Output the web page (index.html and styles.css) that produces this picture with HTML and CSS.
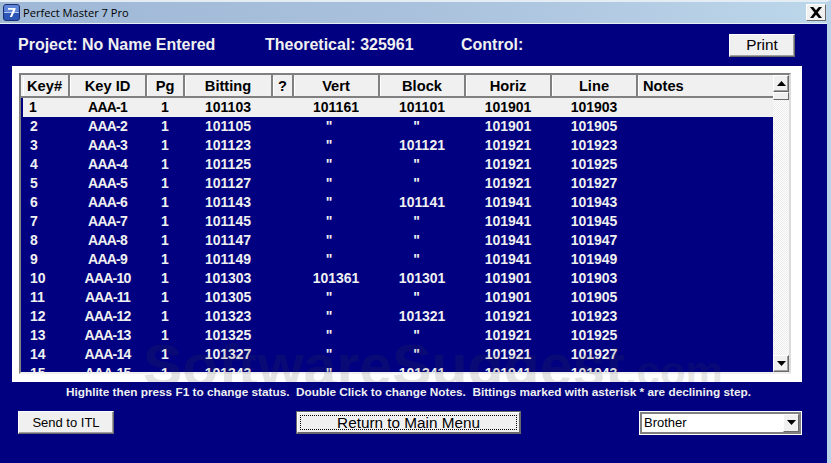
FILE: index.html
```html
<!DOCTYPE html>
<html lang="en">
<head>
<meta charset="utf-8">
<title>Perfect Master 7 Pro</title>
<link rel="stylesheet" href="styles.css">
</head>
<body>
<div class="window">
  <header class="titlebar">
    <svg class="appicon" width="17" height="17" viewBox="0 0 17 17">
      <rect x="0.5" y="0.5" width="16" height="16" rx="2.500" fill="#2c55b8" stroke="#1b2f70"/>
      <rect x="1" y="1" width="15" height="7" rx="2" fill="#5f86d8"/>
      <rect x="1" y="8" width="15" height="1" fill="#b4c6ee"/>
      <path d="M5 4h7.500v1.500L9 13H6.800l3.200-7.200H5z" fill="#fff"/>
    </svg>
    <span class="title">Perfect Master 7 Pro</span>
    <button class="close" aria-label="Close">
      <svg width="14" height="11" viewBox="0 0 14 11"><path d="M1 0h3.200L7 3.300 9.800 0H13L8.700 5.500 13 11H9.800L7 7.700 4.200 11H1l4.300-5.500z" fill="#000"/></svg>
    </button>
  </header>
  <main class="body">
    <section class="info">
      <span class="info-project">Project: No Name Entered</span>
      <span class="info-theo">Theoretical: 325961</span>
      <span class="info-control">Control:</span>
      <button class="btn btn-print">Print</button>
    </section>
    <section class="panel">
      <div class="frame">
        <div class="grid">
          <table>
            <colgroup>
              <col class="c-key"><col class="c-id"><col class="c-pg"><col class="c-bit"><col class="c-q"><col class="c-v"><col class="c-b"><col class="c-h"><col class="c-l"><col class="c-n">
            </colgroup>
            <thead>
              <tr><th>Key#</th><th>Key ID</th><th>Pg</th><th>Bitting</th><th>?</th><th>Vert</th><th>Block</th><th>Horiz</th><th>Line</th><th class="th-notes">Notes</th></tr>
            </thead>
            <tbody>
              <tr class="sel"><td>1</td><td>AAA-1</td><td>1</td><td>101103</td><td></td><td>101161</td><td>101101</td><td>101901</td><td>101903</td><td></td></tr>
              <tr><td>2</td><td>AAA-2</td><td>1</td><td>101105</td><td></td><td class="dv">"</td><td class="db">"</td><td>101901</td><td>101905</td><td></td></tr>
              <tr><td>3</td><td>AAA-3</td><td>1</td><td>101123</td><td></td><td class="dv">"</td><td>101121</td><td>101921</td><td>101923</td><td></td></tr>
              <tr><td>4</td><td>AAA-4</td><td>1</td><td>101125</td><td></td><td class="dv">"</td><td class="db">"</td><td>101921</td><td>101925</td><td></td></tr>
              <tr><td>5</td><td>AAA-5</td><td>1</td><td>101127</td><td></td><td class="dv">"</td><td class="db">"</td><td>101921</td><td>101927</td><td></td></tr>
              <tr><td>6</td><td>AAA-6</td><td>1</td><td>101143</td><td></td><td class="dv">"</td><td>101141</td><td>101941</td><td>101943</td><td></td></tr>
              <tr><td>7</td><td>AAA-7</td><td>1</td><td>101145</td><td></td><td class="dv">"</td><td class="db">"</td><td>101941</td><td>101945</td><td></td></tr>
              <tr><td>8</td><td>AAA-8</td><td>1</td><td>101147</td><td></td><td class="dv">"</td><td class="db">"</td><td>101941</td><td>101947</td><td></td></tr>
              <tr><td>9</td><td>AAA-9</td><td>1</td><td>101149</td><td></td><td class="dv">"</td><td class="db">"</td><td>101941</td><td>101949</td><td></td></tr>
              <tr><td>10</td><td>AAA-10</td><td>1</td><td>101303</td><td></td><td>101361</td><td>101301</td><td>101901</td><td>101903</td><td></td></tr>
              <tr><td>11</td><td>AAA-11</td><td>1</td><td>101305</td><td></td><td class="dv">"</td><td class="db">"</td><td>101901</td><td>101905</td><td></td></tr>
              <tr><td>12</td><td>AAA-12</td><td>1</td><td>101323</td><td></td><td class="dv">"</td><td>101321</td><td>101921</td><td>101923</td><td></td></tr>
              <tr><td>13</td><td>AAA-13</td><td>1</td><td>101325</td><td></td><td class="dv">"</td><td class="db">"</td><td>101921</td><td>101925</td><td></td></tr>
              <tr><td>14</td><td>AAA-14</td><td>1</td><td>101327</td><td></td><td class="dv">"</td><td class="db">"</td><td>101921</td><td>101927</td><td></td></tr>
              <tr><td>15</td><td>AAA-15</td><td>1</td><td>101343</td><td></td><td class="dv">"</td><td>101341</td><td>101941</td><td>101943</td><td></td></tr>
            </tbody>
          </table>
        </div>
        <div class="scrollbar">
          <div class="sb-btn"><svg width="9" height="5" viewBox="0 0 9 5"><path d="M4.500 0L9 5H0z" fill="#000"/></svg></div>
          <div class="sb-thumb"></div>
          <div class="sb-track"></div>
          <div class="sb-btn"><svg width="9" height="5" viewBox="0 0 9 5"><path d="M0 0h9L4.500 5z" fill="#000"/></svg></div>
        </div>
      </div>
      <div class="watermark">SoftwareSuggest<span class="wm-small">.com</span></div>
    </section>
    <p class="hint">Highlite then press F1 to change status.&nbsp; Double Click to change Notes.&nbsp; Bittings marked with asterisk * are declining step.</p>
    <section class="actions">
      <button class="btn btn-send">Send to ITL</button>
      <button class="btn btn-return"><span class="focus">Return to Main Menu</span></button>
      <div class="combo">
        <span class="combo-text">Brother</span>
        <span class="combo-btn"><svg width="9" height="5" viewBox="0 0 9 5"><path d="M0 0h9L4.500 5z" fill="#000"/></svg></span>
      </div>
    </section>
  </main>
</div>
</body>
</html>
```

FILE: styles.css
```css
* { box-sizing: border-box; }
html, body { margin: 0; height: 100%; }
body {
  overflow: hidden;
  font-family: "Liberation Sans", Arial, sans-serif;
  background: #000080;
}
.window {
  width: 831px;
  height: 463px;
  display: flex;
  flex-direction: column;
  border-top: 2px solid #e4ecf4;
  border-right: 4px solid #b9d3e8;
  position: relative;
}
.titlebar {
  flex: 0 0 22px;
  display: flex;
  align-items: center;
  padding: 0 1px 0 3px;
  background: linear-gradient(90deg, #9fb8d6 0%, #a9c1dc 50%, #bcd6ea 100%);
  border-bottom: 1px solid #e6eef6;
}
.appicon { flex: none; }
.title {
  margin-left: 3px;
  font: 11.1px "Open Sans", "Noto Sans", sans-serif;
  color: #000;
}
.close {
  margin-left: auto;
  width: 20px;
  height: 17px;
  padding: 0;
  display: flex;
  align-items: center;
  justify-content: center;
  background: #f0f0f0;
  border: 1px solid;
  border-color: #fff #6b6b6b #6b6b6b #fff;
}
.body {
  flex: 1;
  display: flex;
  flex-direction: column;
  background: #000080;
  min-height: 0;
}
.info {
  height: 42px;
  display: flex;
  align-items: center;
  padding: 0 32px 0 18px;
  color: #f0f0f0;
  font-size: 16px;
  font-weight: bold;
}
.info-project { width: 247px; }
.info-theo { width: 196px; }
.info-control { flex: 1; }
.btn {
  font: 13px "Liberation Sans", Arial, sans-serif;
  color: #000;
  background: #f0f0f0;
  padding: 0;
  border: 1px solid;
  border-color: #fff #696969 #696969 #fff;
  box-shadow: inset -1px -1px 0 #a0a0a0;
}
.btn-print { width: 66px; height: 23px; font-size: 15.3px; }
.panel {
  position: relative;
  margin-left: 12px;
  width: 790px;
  height: 316px;
  flex: none;
  background: #fff;
  padding: 7px 11px 8px 7px;
  overflow: hidden;
}
.frame {
  height: 301px;
  display: flex;
  border: 2px solid;
  border-color: #808080 #dcdcdc #f0f0f0 #808080;
  overflow: hidden;
}
.grid {
  width: 752px;
  flex: none;
  background: #000080;
  overflow: hidden;
}
table {
  table-layout: fixed;
  border-collapse: collapse;
  width: 752px;
  font-size: 14px;
  font-weight: bold;
}
.c-key { width: 47px; }
.c-id { width: 77px; }
.c-pg { width: 38px; }
.c-bit { width: 88px; }
.c-q { width: 21px; }
.c-v { width: 86px; }
.c-b { width: 86px; }
.c-h { width: 86px; }
.c-l { width: 86px; }
.c-n { width: 137px; }
th {
  height: 21px;
  padding: 0 0 2px;
  background: #f0f0f0;
  color: #000;
  font-size: 14.67px;
  font-weight: bold;
  border: 2px solid;
  border-color: #f0f0f0 #808080 #808080 #f0f0f0;
  box-shadow: inset 1px 0 0 #fff;
}
th:first-child { text-align: left; padding-left: 4px; }
.th-notes { text-align: left; padding-left: 5px; }
td {
  height: 19px;
  padding: 0;
  text-align: center;
  color: #f0f0f0;
  line-height: 19px;
}
td:nth-child(2) { letter-spacing: -0.8px; }
td:first-child { text-align: left; padding-left: 8px; }
.sel td { background: #f0f0f0; color: #000; }
.sel td:first-child { border-left: 2px solid #000080; padding-left: 6px; }
.dv { padding-right: 14px; }
.db { padding-right: 11px; }
.scrollbar {
  flex: 1;
  display: flex;
  flex-direction: column;
}
.sb-btn {
  flex: 0 0 17px;
  display: flex;
  align-items: center;
  justify-content: center;
  background: #f0f0f0;
  border: 1px solid;
  border-color: #fff #696969 #696969 #fff;
  box-shadow: inset -1px -1px 0 #a0a0a0;
}
.sb-thumb {
  flex: 0 0 8px;
  background: #f0f0f0;
  border: 1px solid;
  border-color: #fff #696969 #696969 #fff;
}
.sb-track {
  flex: 1;
  background-color: #fff;
  background-image: repeating-conic-gradient(#ebebeb 0 25%, #fff 0 50%);
  background-size: 2px 2px;
}
.watermark {
  position: absolute;
  left: 131px;
  top: 271px;
  font-size: 59px;
  font-weight: bold;
  line-height: 59px;
  white-space: nowrap;
  color: rgba(69, 69, 69, 0.145);
  pointer-events: none;
}
.wm-small { font-size: 42px; }
.hint {
  margin: 3px 0 0;
  height: 15px;
  line-height: 15px;
  text-align: center;
  padding-right: 10px;
  color: #f0f0f0;
  font-size: 11.8px;
  font-weight: bold;
}
.actions {
  margin-top: 11px;
  padding-left: 18px;
  display: flex;
  align-items: flex-start;
}
.btn-send { width: 96px; height: 23px; }
.btn-return {
  margin-left: 182px;
  width: 225px;
  height: 23px;
  font-size: 15.3px;
  padding: 2px;
  border: 2px solid;
  border-color: #fff #696969 #696969 #fff;
  outline: 1px solid #696969;
  outline-offset: -1px;
  box-shadow: none;
}
.focus {
  display: block;
  height: 100%;
  line-height: 13px;
  border: 1px dotted #000;
}
.combo {
  margin-left: 118px;
  width: 163px;
  height: 24px;
  background: #fff;
  padding: 1px 2px 2px 1px;
  border: 1px solid #fff;
  box-shadow: inset 0 0 0 2px #808080;
  display: flex;
  align-items: center;
  font-size: 13px;
}
.combo-text { flex: 1; padding-left: 3px; color: #000; }
.combo-btn {
  width: 16px;
  height: 18px;
  display: flex;
  align-items: center;
  justify-content: center;
  background: #f0f0f0;
  border: 1px solid;
  border-color: #fff #696969 #696969 #fff;
}
```
